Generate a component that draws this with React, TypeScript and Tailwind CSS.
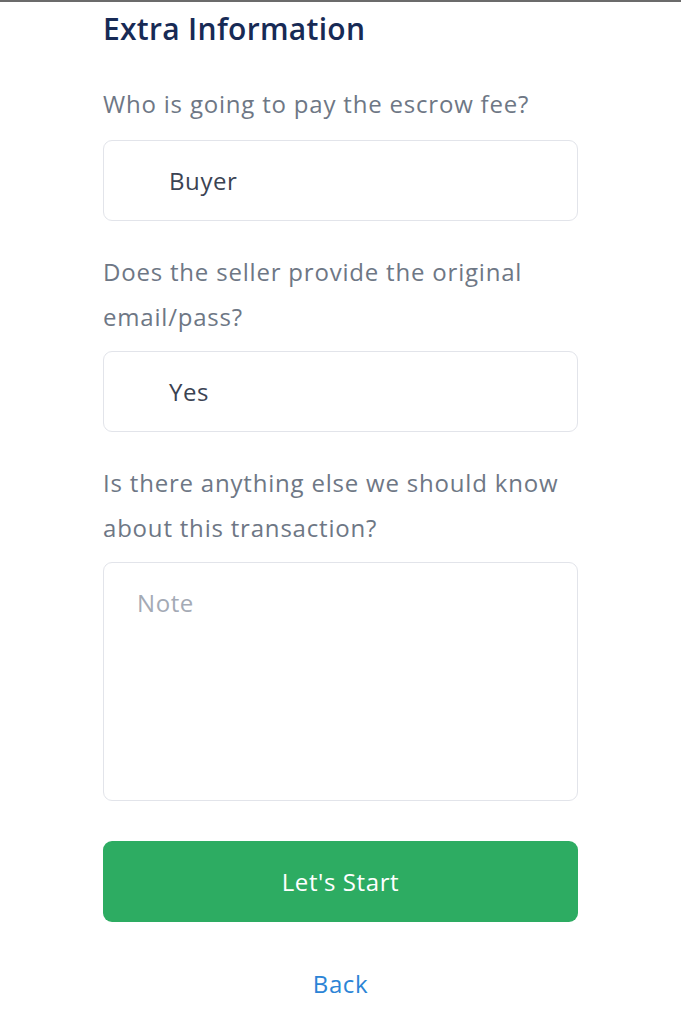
import { useState } from "react";

export default function App() {
  const [note, setNote] = useState("");
  const label = "text-[24px] leading-[45px] tracking-[0.8px] text-[#6e7785]";
  const box =
    "w-full h-[81px] flex items-center pl-[65px] rounded-[9px] border border-[#e2e4ea] bg-white text-[24px] tracking-[0.6px] text-[#3b4352]";

  return (
    <div
      className="min-h-[1024px] w-full bg-white border-t-2 border-[#6b6b6b]"
      style={{ fontFamily: "'Open Sans', Lato, sans-serif" }}
    >
      <div className="w-[475px] ml-[103px] flex flex-col">
        <h2 className="text-[30px] leading-[40px] font-semibold tracking-[0.3px] text-[#172a55] mt-[7px]">
          Extra Information
        </h2>

        <label className={`${label} mt-[32px]`}>Who is going to pay the escrow fee?</label>
        <div className={`${box} mt-[14px]`}>Buyer</div>

        <label className={`${label} mt-[28px]`}>
          Does the seller provide the original email/pass?
        </label>
        <div className={`${box} mt-[12px]`}>Yes</div>

        <label className={`${label} mt-[28px]`}>
          Is there anything else we should know about this transaction?
        </label>
        <textarea
          className="mt-[12px] w-full h-[239px] resize-none rounded-[9px] border border-[#e2e4ea] px-[33px] pt-[22px] text-[24px] tracking-[0.6px] text-[#3b4352] placeholder:text-[#a4aab5] outline-none"
          placeholder="Note"
          value={note}
          onChange={(e) => setNote(e.target.value)}
        />

        <button className="mt-[40px] h-[81px] w-full rounded-[9px] bg-[#2dac62] text-white text-[24px] tracking-[0.6px] font-medium">
          Let's Start
        </button>

        <button className="mt-[44px] self-center text-[24px] tracking-[0.6px] text-[#2b84d6]">Back</button>
      </div>
    </div>
  );
}
